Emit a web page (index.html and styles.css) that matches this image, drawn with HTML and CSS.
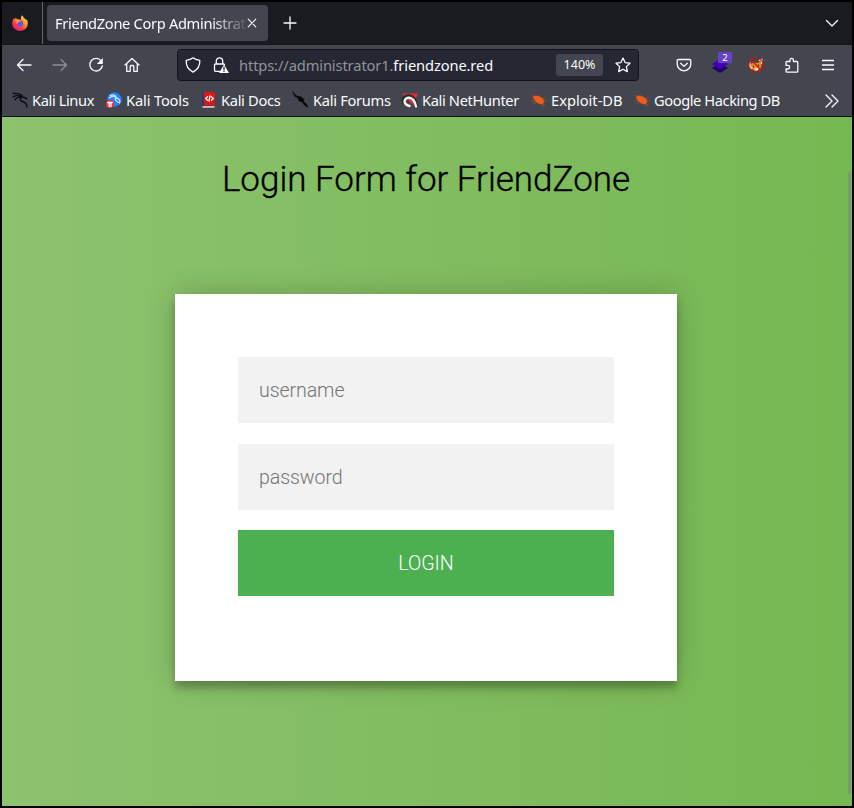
FILE: index.html
```html
<!DOCTYPE html>
<html lang="en">
<head>
<meta charset="utf-8">
<title>FriendZone Corp Administrator</title>
<link rel="stylesheet" href="styles.css">
</head>
<body>
<div class="window">
  <header class="tabs">
    <div class="app-tab">
      <svg width="16" height="16" viewBox="0 0 16 16"><defs><linearGradient id="fire" x1="1" y1="0" x2="0.2" y2="1"><stop offset="0" stop-color="#fff04a"/><stop offset=".4" stop-color="#ff9a24"/><stop offset=".7" stop-color="#ff3d48"/><stop offset="1" stop-color="#e01888"/></linearGradient></defs><path fill="url(#fire)" d="M10 .2c1.2 1 1.5 2 2 2.8 1.200.5 1.700 1.200 2.100 2l.5-.8c1 1.800 1.300 3 1.200 4.500C15.500 13 12.200 15.800 8 15.800S.3 12.700.2 8.500C.1 6.500.8 4.600 2 3l.4 1.500C3 3.300 3.500 2.700 4.200 2.400c0 .8.200 1.300.6 1.700L9 4.800C8.800 3 9.100 1.500 10 .2Z"/><circle cx="8" cy="8.500" r="3.200" fill="#7650df"/><path d="M3.500 5.200c1.500-1 3-.8 4.200 0L9.200 6 7 7.100c-.9.500-1.500.7-1.700 1.700C3.500 8 3 6.800 3.500 5.200Z" fill="#ff9822"/></svg>
    </div>
    <div class="tab"><span class="tab-title">FriendZone Corp Administrat</span><svg class="close" width="10" height="10" viewBox="0 0 10 10"><path d="M1.200 1.200l7.600 7.600m0-7.600L1.200 8.800"/></svg></div>
    <svg class="plus" width="14" height="14" viewBox="0 0 14 14"><path d="M7 1v12M1 7h12"/></svg>
    <svg class="all-tabs" width="14" height="9" viewBox="0 0 14 9"><path d="M1.500 1.500L7 7l5.500-5.500"/></svg>
  </header>
  <nav class="toolbar">
    <div class="nav-icons">
      <svg viewBox="0 0 16 16"><path d="M15 8H1.500M7 2.500L1.500 8 7 13.500"/></svg>
      <svg class="muted" viewBox="0 0 16 16"><path d="M1 8h13.500M9 2.500L14.500 8 9 13.500"/></svg>
      <svg viewBox="0 0 16 16"><path d="M13.400 4.200A6.300 6.300 0 1 0 14.300 9"/><path d="M14.800 1v6H8.800Z" fill="#fbfbfe" stroke="none"/></svg>
      <svg viewBox="0 0 16 16"><path d="M1 8l7-6.500L15 8M2.700 7v7.300h3.500V9.500q0-1 1-1h1.600q1 0 1 1v4.800h3.500V7"/></svg>
    </div>
    <div class="urlbar">
      <svg viewBox="0 0 16 16"><path d="M8 .8c2 1.700 4 2.200 6.800 2.500.3 5.500-2 9.400-6.800 11.900C3.200 12.700.9 8.800 1.200 3.300 4 3 6 2.500 8 .8Z"/></svg>
      <svg class="lock" viewBox="0 0 16 16"><path d="M6.500 14.300h-4q-1 0-1-1V8q0-1 1-1h8q1 0 1 1M3.300 7V4a3.200 3.200 0 0 1 6.400 0v3"/><path d="M11 7.500L16 16H6Z" fill="#fbfbfe" stroke="none"/><path d="M11 10.200v2.600m0 1.500v.1" class="warn"/></svg>
      <span class="address">https://administrator1.<b>friendzone.red</b></span>
      <span class="zoom">140%</span>
      <svg class="star" viewBox="0 0 16 16"><path d="M8 1l2.100 4.600 4.900.6-3.600 3.400.9 5L8 12.200l-4.300 2.400.9-5L1 6.200l4.900-.6Z"/></svg>
    </div>
    <div class="extensions">
      <svg viewBox="0 0 16 16"><path d="M2.500 2.500h11q1.300 0 1.300 1.300V7a6.800 6.800 0 0 1-13.600 0V3.800q0-1.300 1.300-1.300ZM4.700 6.200L8 9.400l3.300-3.200"/></svg>
      <div class="layers"><svg viewBox="0 0 16 16"><path d="M0 11l8-5 8 5-8 5Z" fill="#210077" stroke="none"/><path d="M0 7l8-5 8 5-8 5Z" fill="#4100b5" stroke="none"/></svg><span class="count">2</span></div>
      <svg viewBox="0 0 16 16"><path d="M2 8l3-2.500L9 6l5-2-1 6.500-3 3H6L3 11Z" fill="#f08a20" stroke="none"/><path d="M1.800 5.500v4l2 2M11.500 3.500l2.300-1.200v4" stroke="#ead5c4" stroke-width="1.500"/><path d="M6.500 12l2-1.500 2 1-1 2H7Z" fill="#f4e4d8" stroke="none"/><path d="M5.500 9.200v.8m5-2v.8" stroke="#473c36"/><circle cx="8" cy="8" r="7.300" stroke="#cf1212" stroke-width="1.100"/><path d="M2.800 2.800l10.400 10.400" stroke="#cf1212" stroke-width="1.300"/></svg>
      <svg viewBox="0 0 16 16"><path d="M2 5.500q0-1 1-1h3V3a1.700 1.700 0 0 1 3.400 0v1.500h3.400q1 0 1 1v8.700q0 1-1 1H3q-1 0-1-1V12h1.800a1.800 1.800 0 0 0 0-3.600H2Z"/></svg>
      <svg class="menu" viewBox="0 0 16 16"><path d="M2 3.500h12M2 8h12M2 12.500h12"/></svg>
    </div>
  </nav>
  <div class="bookmarks">
    <span class="bookmark linux"><svg viewBox="0 0 16 16"><path d="M1 1.500c4-.5 7 .2 9 2M1 5c3-1.700 6-1.500 8-.5M3 7.500C5 5.500 8 4.700 10 5l4 1 .8 1.200M9 5c-2 3 0 4.500 2.500 5 2.500.4 3 2 3.500 5"/></svg>Kali Linux</span>
    <span class="bookmark tools"><svg viewBox="0 0 16 16"><circle cx="8.500" cy="7.500" r="7.200" fill="#287eff"/><path d="M3 6q5-3.500 7 0 3.500 0 4 4M4 3.500q4-1.500 6 1M9.500 6q-1 3 4 5" stroke="#bfe6ff" fill="none"/><circle cx="4" cy="12" r="4" fill="#ef3434"/><path d="M1.800 10.500h4.400M3.200 10.500v4m1.800-4v4" stroke="#fff"/></svg>Kali Tools</span>
    <span class="bookmark docs"><svg viewBox="0 0 16 16"><path d="M1 1.500L4 0v14.500L1 16Z" fill="#33366d"/><path d="M3 0h11v13H3Z" fill="#e01616"/><path d="M1.500 14h12v1.800h-12Z" fill="#e9bbb5"/><path d="M6.500 4.800L4.700 6.500l1.800 1.800m4-3.500l1.800 1.700-1.800 1.800M9 4L8 9" stroke="#fff" fill="none"/></svg>Kali Docs</span>
    <span class="bookmark forums"><svg viewBox="0 0 16 16"><path d="M0 0l3 3.500 3 1.300 1-.5 4 3-.5 2 3 3 1.500 3-4-2.500-1.500-2.500-3.500-1.500-1.200-3L2 4.500Z" fill="#050607" stroke-width=".6"/></svg>Kali Forums</span>
    <span class="bookmark nethunter"><svg viewBox="0 0 16 16"><path d="M0 1.500h15.500L12 14Z" fill="#ed293b"/><path d="M2.500 11C0 7 4 3.500 8 4.500c4 1 5.500 4.500 6 9.500" stroke="#25272d" stroke-width="4" fill="none"/><path d="M7.500 14C0 12 2 5 7.500 5.800c4 .6 5.500 4 6.500 8.700" stroke="#f6f3f3" stroke-width="2.500" fill="none"/></svg>Kali NetHunter</span>
    <span class="bookmark exploit"><svg viewBox="0 0 16 16"><path d="M2 5l2.500-1.200 4 .8L12 7l1 3-1.500 2-3.500-.3-3-2L3 7Z" fill="#ef5d16"/><path d="M1 3l3 2m3-2l1 2M0 9h5m0 2-3 1m8-1 3 3m0-5h3m-4 3 2 1m-3-6 3-1"/></svg>Exploit-DB</span>
    <span class="bookmark hacking exploit"><svg viewBox="0 0 16 16"><path d="M2 5l2.500-1.200 4 .8L12 7l1 3-1.500 2-3.500-.3-3-2L3 7Z" fill="#ef5d16"/><path d="M1 3l3 2m3-2l1 2M0 9h5m0 2-3 1m8-1 3 3m0-5h3m-4 3 2 1m-3-6 3-1"/></svg>Google Hacking DB</span>
    <svg class="more" width="14" height="14" viewBox="0 0 14 14"><path d="M1 1l6 6-6 6M7 1l6 6-6 6"/></svg>
  </div>
  <main class="page">
    <h1>Login Form for FriendZone</h1>
    <form class="login">
      <input type="text" placeholder="username">
      <input type="password" placeholder="password">
      <button type="button">LOGIN</button>
    </form>
    <div class="scrollbar"></div>
  </main>
</div>
</body>
</html>
```
FILE: styles.css
```css
* { box-sizing: border-box; }
html, body { width: 100%; height: 100%; margin: 0; overflow: hidden; }
body { background: #000; color: #fbfbfe; font: 14.67px "Noto Sans", sans-serif; }
.window { height: 808px; border: 2px solid #000; display: flex; flex-direction: column; }
svg { flex: none; overflow: visible; fill: none; stroke: #fbfbfe; stroke-width: 1.3; stroke-linecap: round; stroke-linejoin: round; }

.tabs { height: 43px; background: #1a1b20; display: flex; align-items: center; border-bottom: 1px solid #15161a; }
.app-tab { width: 41px; height: 42px; border-right: 1px solid #65676d; padding: 13px 10px; }
.app-tab svg { display: block; stroke: none; }
.tab { width: 221px; height: 36px; margin-left: 4px; border-radius: 4px; background: #43464e; display: flex; align-items: center; padding-left: 8px; }
.tab-title { width: 191px; letter-spacing: -.33px; white-space: nowrap; -webkit-mask-image: linear-gradient(90deg, #000 82%, rgba(0,0,0,.1)); mask-image: linear-gradient(90deg, #000 82%, rgba(0,0,0,.1)); }
.close { margin-left: 1px; stroke-width: 1.1; }
.plus { margin-left: 15px; }
.all-tabs { margin-left: auto; margin-right: 13px; }

.toolbar { height: 40px; background: #43464e; display: flex; align-items: center; }
.toolbar svg { width: 16px; height: 16px; display: block; }
.nav-icons { width: 175px; display: flex; gap: 20px; padding-left: 14px; }
.muted { opacity: .4; }
.urlbar { width: 462px; height: 32px; background: #252732; border: 1px solid #111217; border-radius: 4px; display: flex; align-items: center; padding: 0 7px; white-space: nowrap; }
.lock { margin-left: 12px; }
.lock .warn { stroke: #252732; }
.address { color: #92939b; margin-left: 10px; letter-spacing: -.11px; }
.address b { color: #fbfbfe; font-weight: 400; }
.zoom { width: 47px; height: 22px; line-height: 22px; background: #43464e; border-radius: 3px; margin-left: auto; font-size: 12.5px; text-align: center; }
.star { margin-left: 12px; }
.extensions { display: flex; gap: 20px; margin-left: 37px; }
.layers { position: relative; }
.count { position: absolute; left: 6px; top: -5px; width: 14px; height: 11px; border-radius: 1px; background: #6842c4; font-size: 9.5px; line-height: 11px; text-align: center; }
.toolbar .menu { stroke-linecap: butt; }

.bookmarks { height: 32px; background: #43464e; border-bottom: 1px solid #101114; display: flex; align-items: center; padding-left: 10px; white-space: nowrap; }
.bookmark { display: flex; align-items: center; gap: 4px; height: 31px; padding-bottom: 1px; letter-spacing: -.4px; }
.bookmark svg { width: 16px; height: 16px; }
.linux { width: 94px; }
.tools { width: 95px; letter-spacing: -.15px; }
.docs { width: 92px; letter-spacing: -.33px; }
.forums { width: 109px; letter-spacing: -.3px; }
.nethunter { width: 129px; letter-spacing: -.36px; }
.exploit { width: 103px; letter-spacing: 0; }
.hacking { width: 148px; letter-spacing: -.42px; }
.linux svg, .forums svg { stroke: #08090b; }
.tools svg, .docs svg, .nethunter svg { stroke: none; }
.exploit svg { stroke: #ef5d16; stroke-width: .4; }
.more { margin-left: auto; margin-right: 13px; }

.page { position: relative; flex: 1; min-height: 0; background: linear-gradient(to left, #76b852, #8dc26f); display: flex; flex-direction: column; align-items: center; padding-right: 2px; font-family: Roboto, sans-serif; }
h1 { margin: 42px 0 0; font-size: 35px; line-height: 41px; font-weight: 350; -webkit-text-stroke: .35px #000; color: #000; white-space: nowrap; }
.login { width: 502px; height: 387px; margin-top: 94px; padding: 63px; background: #fff; display: flex; flex-direction: column; box-shadow: 0 0 28px rgba(0,0,0,.2), 0 7px 7px rgba(0,0,0,.24); }
input, button { width: 376px; height: 66px; border: 0; border-radius: 0; padding: 0 21px; font: 300 19.6px Roboto, sans-serif; }
input { background: #f2f2f2; margin: 0 0 21px; letter-spacing: -.1px; }
input + input { margin-bottom: 20px; }
input::placeholder { color: #757575; opacity: 1; }
button { background: #4caf50; color: #fff; }
.scrollbar { position: absolute; right: 1px; top: 55px; width: 3px; height: 622px; border-radius: 2px; background: #7d9776; }
```
